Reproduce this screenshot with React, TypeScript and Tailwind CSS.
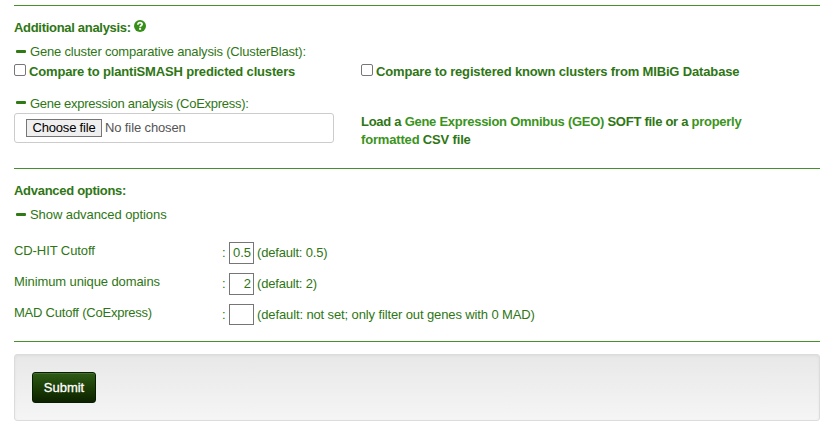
import type { ReactNode } from "react";

function Rule() {
  return <div className="h-px bg-[#45902a]" />;
}

function HelpIcon() {
  return (
    <svg className="ml-[3px] h-3 w-3 -mt-1" viewBox="0 0 12 12">
      <circle cx="6" cy="6" r="6" fill="#369018" />
      <path d="M3.9 4.7C3.9 3.2 4.8 2.6 6 2.6S8.1 3.3 8.1 4.3C8.1 5.5 6.1 5.5 6.1 7.3" fill="none" stroke="white" strokeWidth="1.8" />
      <rect x="5.1" y="8" width="2" height="1.8" fill="white" />
    </svg>
  );
}

function Toggle({ children, spacing, dash = "-mt-0.5" }: { children: string; spacing: string; dash?: string }) {
  return (
    <div className="flex h-[18px] items-center pl-0.5">
      <span className={`${dash} mr-1 h-[3px] w-[10px] rounded-[1px] bg-[#307a16]`} />
      <span className={spacing}>{children}</span>
    </div>
  );
}

function Check({ children, spacing }: { children: string; spacing: string }) {
  return (
    <label className="flex h-[18px] items-center font-bold">
      <input type="checkbox" className="-mt-1 mr-[3px] h-[12px] w-[12px] shrink-0 appearance-none rounded-[2px] border border-[#777] bg-white" />
      <span className={spacing}>{children}</span>
    </label>
  );
}

function Option({ label, value, note, labelSpacing, noteSpacing, height = "h-[22px]" }: { label: string; value: string; note: ReactNode; labelSpacing: string; noteSpacing: string; height?: string }) {
  return (
    <div className="flex h-[31px] items-start">
      <div className="w-[208px]">
        <span className={labelSpacing}>{label}</span>
      </div>
      <span className="mt-[2px] w-[7px]">:</span>
      <input
        type="text"
        defaultValue={value}
        aria-label={label}
        className={`${height} w-[25px] border border-[#767676] bg-white px-0.5 pb-0.5 text-right outline-none`}
      />
      <span className="ml-[3px] mt-[2px]">
        <span className={noteSpacing}>{note}</span>
      </span>
    </div>
  );
}

export default function App() {
  return (
    <div className="h-[431px] w-[833px] overflow-hidden bg-white pl-[14px] pr-[13px] pt-[5px] font-['Liberation_Sans',Arial,sans-serif] text-[13px] leading-[18px] whitespace-nowrap text-[#2e7614]">
      <Rule />
      <div className="mt-[13px] flex h-[18px] items-center font-bold">
        <span className="tracking-[-0.3px]">Additional analysis:</span>
        <HelpIcon />
      </div>
      <div className="mt-1.5">
        <Toggle spacing="tracking-[-0.18px]">Gene cluster comparative analysis (ClusterBlast):</Toggle>
      </div>
      <div className="mt-0.5 flex">
        <div className="w-[347px]">
          <Check spacing="tracking-[-0.17px]">Compare to plantiSMASH predicted clusters</Check>
        </div>
        <Check spacing="tracking-[-0.155px]">Compare to registered known clusters from MIBiG Database</Check>
      </div>
      <div className="mt-[14px]">
        <Toggle spacing="tracking-[-0.26px]" dash="-mt-[3px]">Gene expression analysis (CoExpress):</Toggle>
      </div>
      <div className="flex h-[55px]">
        <div className="w-[347px]">
          <div className="flex h-[30px] w-[320px] items-center rounded-[3px] border border-[#ccc] pl-[11px] text-[#555]">
            <button className="h-[18px] w-[76px] border border-[#767676] bg-[#efefef] text-[13px] leading-4 tracking-[-0.2px] text-black">Choose file</button>
            <span className="ml-[3px] tracking-[-0.12px]">No file chosen</span>
          </div>
        </div>
        <p className="font-bold tracking-[-0.27px]">
          Load a <a className="text-[#3a941c]">Gene Expression Omnibus (GEO)</a> SOFT file or a <a className="text-[#3a941c]">properly</a>
          <br />
          <span className="tracking-[-0.17px]">
            <a className="text-[#3a941c]">formatted</a> CSV file
          </span>
        </p>
      </div>
      <Rule />
      <div className="mt-[13px] h-[18px] font-bold tracking-[-0.29px]">Advanced options:</div>
      <div className="mt-1.5">
        <Toggle spacing="tracking-[-0.07px]">Show advanced options</Toggle>
      </div>
      <div className="mt-[18px] h-[99px]">
        <Option label="CD-HIT Cutoff" value="0.5" note="(default: 0.5)" labelSpacing="tracking-[-0.08px]" noteSpacing="tracking-[-0.19px]" />
        <Option label="Minimum unique domains" value="2" note="(default: 2)" labelSpacing="tracking-[-0.1px]" noteSpacing="tracking-[-0.19px]" />
        <Option label="MAD Cutoff (CoExpress)" value="" note="(default: not set; only filter out genes with 0 MAD)" labelSpacing="tracking-[-0.22px]" noteSpacing="tracking-[-0.12px]" height="h-[21px]" />
      </div>
      <Rule />
      <div className="mt-3 h-[67px] rounded-[3px] border border-[#dcdcdc] bg-linear-to-b from-[#e8e8e8] to-[#f5f5f5] pl-[17px] pt-[17px] shadow-[inset_0_1px_3px_rgba(0,0,0,0.05)]">
        <button className="block h-[31px] w-16 rounded-[3px] border border-[#061d00] bg-linear-to-b from-[#2d5c16] to-[#0d2200] text-[13px] text-white shadow-[inset_0_1px_0_rgba(255,255,255,0.12)] [-webkit-text-stroke:0.3px_white]">Submit</button>
      </div>
    </div>
  );
}
